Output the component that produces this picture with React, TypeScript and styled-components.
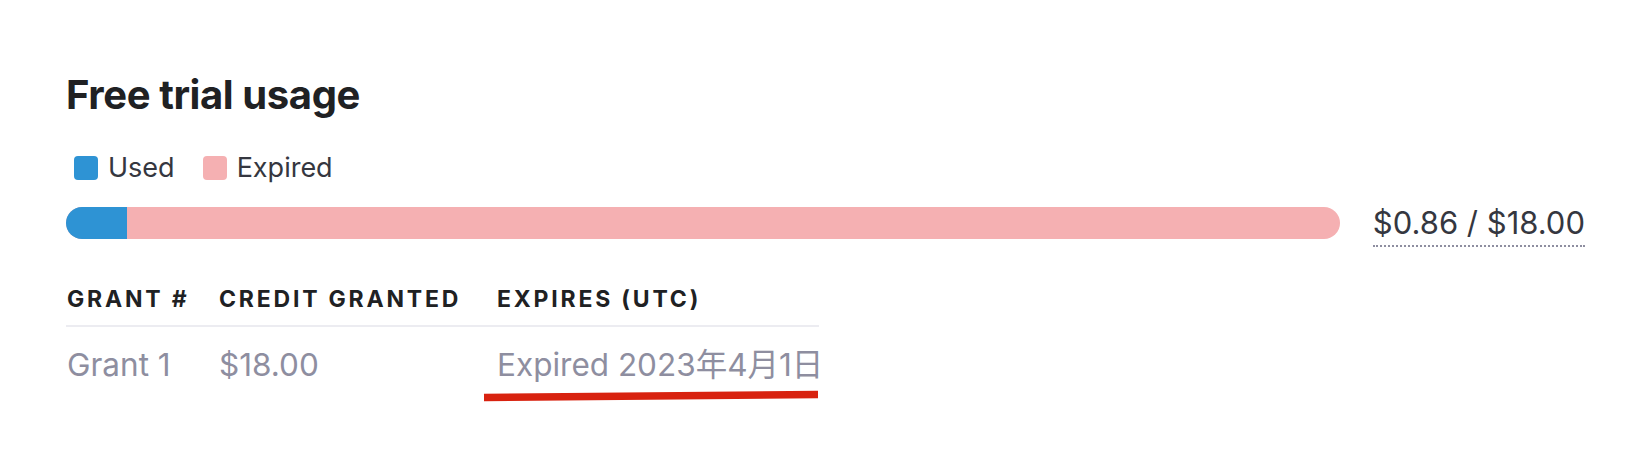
import React from "react";
import styled, { createGlobalStyle } from "styled-components";

const Global = createGlobalStyle`
  html, body { margin: 0; padding: 0; background: #ffffff; }
  body { font-family: Inter, "Noto Sans", "Noto Sans CJK JP", sans-serif; color: #353740; }
`;

const Page = styled.div`
  padding: 71px 59px 40px 66px;
  display: flex;
  flex-direction: column;
`;

const Title = styled.h1`
  margin: 0;
  font-size: 40px;
  line-height: 48px;
  font-weight: 700;
  color: #202123;
  letter-spacing: -0.4px;
`;

const Legend = styled.div`
  display: flex;
  align-items: center;
  gap: 28px;
  margin-top: 32px;
  margin-left: 8px;
`;

const LegendItem = styled.div`
  display: flex;
  align-items: center;
  gap: 10px;
  font-size: 27px;
  line-height: 34px;
  color: #353740;
`;

const Swatch = styled.span<{ $color: string }>`
  width: 24px;
  height: 24px;
  border-radius: 4px;
  background: ${(p) => p.$color};
`;

const UsageRow = styled.div`
  display: flex;
  align-items: flex-start;
  gap: 33px;
  margin-top: 20px;
`;

const Bar = styled.div`
  flex: 1;
  height: 32px;
  margin-top: 2px;
  border-radius: 16px;
  background: #f5b0b2;
  overflow: hidden;
  display: flex;
`;

const BarFill = styled.div`
  height: 100%;
  background: #2e93d4;
`;

const UsageValue = styled.span`
  font-size: 31px;
  line-height: 36px;
  color: #353740;
  border-bottom: 2px dotted #8e8ea0;
  padding-bottom: 4px;
  white-space: nowrap;
`;

const Table = styled.div`
  display: grid;
  grid-template-columns: 152px 278px 323px;
  width: fit-content;
  margin-top: 25px;
`;

const HeadCell = styled.div`
  font-size: 23px;
  line-height: 30px;
  font-weight: 700;
  letter-spacing: 2.8px;
  text-transform: uppercase;
  color: #202123;
  padding: 12px 0 11px 1px;
  border-bottom: 2px solid #ececf1;
`;

const Cell = styled.div`
  position: relative;
  font-size: 31.5px;
  line-height: 38px;
  color: #8e8ea0;
  padding: 19px 0 0 1px;
  white-space: nowrap;
`;

const Annotation = styled.svg`
  position: absolute;
  left: -12px;
  top: 62px;
  width: 334px;
  height: 12px;
  overflow: visible;
`;

export default function App() {
  const used = 0.86;
  const total = 18;
  return (
    <>
      <Global />
      <Page>
        <Title>Free trial usage</Title>
        <Legend>
          <LegendItem>
            <Swatch $color="#2e93d4" />
            Used
          </LegendItem>
          <LegendItem>
            <Swatch $color="#f5b0b2" />
            Expired
          </LegendItem>
        </Legend>
        <UsageRow>
          <Bar>
            <BarFill style={{ width: `${(used / total) * 100}%` }} />
          </Bar>
          <UsageValue>$0.86 / $18.00</UsageValue>
        </UsageRow>
        <Table>
          <HeadCell>Grant #</HeadCell>
          <HeadCell>Credit granted</HeadCell>
          <HeadCell>Expires (UTC)</HeadCell>
          <Cell>Grant 1</Cell>
          <Cell>$18.00</Cell>
          <Cell>
            Expired 2023年4月1日
            <Annotation viewBox="0 0 334 12" preserveAspectRatio="none">
              <path d="M0 8.5 L334 5.5" stroke="#d8220f" strokeWidth="7.5" fill="none" />
            </Annotation>
          </Cell>
        </Table>
      </Page>
    </>
  );
}
